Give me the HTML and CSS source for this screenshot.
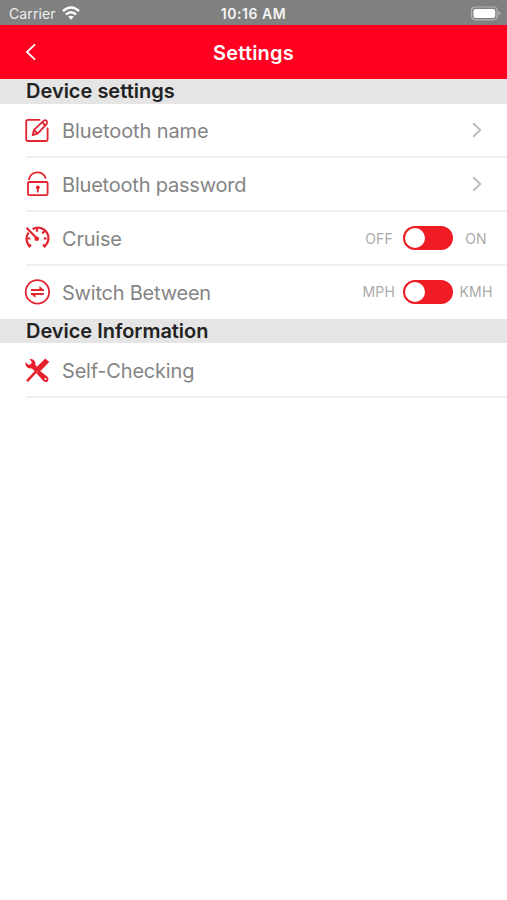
FILE: index.html
```html
<!DOCTYPE html>
<html lang="en">
<head>
<meta charset="utf-8">
<title>Settings</title>
<link rel="stylesheet" href="styles.css">
</head>
<body>
<div class="status">
  <div class="carrier"><span>Carrier</span>
    <svg class="wifi" width="18" height="14" viewBox="0 0 18 14" fill="none" stroke="#fff" stroke-width="2.5"><path d="M1 5.2Q9-2.2 17 5.2M4 8.5Q9 4 14 8.5"/><path d="M9 13.7 6.2 10.8Q9 8.5 11.8 10.8Z" fill="#fff" stroke="none"/></svg>
  </div>
  <span class="time">10:16 AM</span>
  <svg class="battery" width="31" height="15" viewBox="0 0 31 15"><rect x="1.6" y="1" width="25.5" height="12.8" rx="3.5" fill="none" stroke="#b5b5b5" stroke-width="1.2"/><rect x="3.5" y="3" width="21.7" height="9" rx="2" fill="#fff"/><path d="M28.4 5v4.6q2-.8 2-2.3t-2-2.3Z" fill="#b5b5b5"/></svg>
</div>
<header class="nav">
  <svg class="back" width="12" height="18" viewBox="0 0 12 18" fill="none" stroke="#fff" stroke-width="1.8"><path d="M10 1.3 2 9l8 7.7"/></svg>
  <h1>Settings</h1>
</header>
<main>
  <h2>Device settings</h2>
  <ul>
    <li>
      <svg class="icon" viewBox="0 0 26 26"><path d="M15.6 2.8H4Q2.2 2.8 2.2 4.6V22.2Q2.2 24 4 24H21.8Q23.6 24 23.6 22.2V11.5"/><path d="m8.6 18.1 1.4-5.2L19.8 3.6q1.3-1 2.8.3 1.4 1.6.2 3L13.6 16.7Zm1.5-5 3.3 3.4M18.2 5.2l3.2 3.3"/></svg>
      <span class="label l1">Bluetooth name</span>
      <svg class="chevron" viewBox="0 0 10 16"><path d="m1.2 1.2 7 6.8-7 6.8"/></svg>
    </li>
    <li>
      <svg class="icon" viewBox="0 0 26 26"><rect x="4" y="11" width="19.6" height="13.2" rx="1.2"/><path d="M5 8.4C7-.4 18-1 21.6 6.8"/><path d="M13.8 16.5v4.2"/><circle class="solid" cx="13.8" cy="16.3" r="1.9"/></svg>
      <span class="label l2">Bluetooth password</span>
      <svg class="chevron" viewBox="0 0 10 16"><path d="m1.2 1.2 7 6.8-7 6.8"/></svg>
    </li>
    <li>
      <svg class="icon bold" viewBox="0 0 26 26"><path d="M8.7 4.2A10 10 0 0 1 19.5 21.8M4.6 7.7A10 10 0 0 0 6.5 21.8"/><path d="M2.5 2.8 12 12.6M13 3.5v3.2M3.3 13.5h3M22.7 13.5h-3M20.4 6.3l-2.2 2.1M4.4 21.8l2.6-2.2M21.6 21.8 19 19.6"/><circle class="solid" cx="12.8" cy="13.7" r="2.3"/></svg>
      <span class="label l3">Cruise</span>
      <div class="control"><span class="off">OFF</span><i class="toggle"></i><span class="on">ON</span></div>
    </li>
    <li>
      <svg class="icon" viewBox="0 0 26 26"><circle cx="13.4" cy="12.9" r="11.7"/><path class="arrows" d="M7 10.9h12.6M19.8 14.9H7.2"/><path class="solid" d="M15.4 6.7 20.6 11.9H15.4zM11.4 19.1 6.2 13.9h5.2z"/></svg>
      <span class="label l4">Switch Between</span>
      <div class="control"><span class="off mph">MPH</span><i class="toggle"></i><span class="on">KMH</span></div>
    </li>
  </ul>
  <h2 class="info">Device Information</h2>
  <ul>
    <li class="last">
      <svg class="icon" viewBox="0 0 26 26"><path class="solid" d="M5.3 2.2Q9.3 1 11 4.6q.8 1.7.3 3.5l3.2 3.2-3.4 3.3-3.4-3.4Q4.4 12 2.2 9.2 1 7.4 1.4 5.2l3.1 2.5 2.7-.6.5-2.6ZM15.2 13.2l8.3 6.6q2 2.2.3 4.4-2.2 1.8-4.4-.2L12.4 16.3Z"/><path class="solid" d="M21.3 1.4 25.2 5 17 13.6l-3.3 1L4 24.9l-1.9-1.6 9.6-10.4.7-2.6Z"/><circle cx="21.5" cy="22" r="1.1" fill="#fff" stroke="none"/></svg>
      <span class="label l5">Self-Checking</span>
    </li>
  </ul>
</main>
</body>
</html>
```
FILE: styles.css
```css
* { box-sizing: border-box; }
body { margin: 0; background: #fff; font-family: Inter, "Liberation Sans", sans-serif; color: #222; }
h1, h2, ul { margin: 0; padding: 0; }
ul { list-style: none; }
svg { display: block; flex: none; }
.status { height: 25px; background: #808080; color: #fff; display: grid; grid-template-columns: 1fr auto 1fr; align-items: center; padding: 1px 6px 0 9px; }
.carrier { display: flex; align-items: center; gap: 6px; font-size: 14px; line-height: 24px; color: #eee; letter-spacing: .1px; padding-top: 1px; }
.wifi { margin-top: -2px; }
.time { font-size: 14px; line-height: 24px; font-weight: 600; color: #f4f4f4; letter-spacing: .55px; margin-left: -3px; }
.battery { justify-self: end; }
.nav { height: 54px; background: #ff0020; color: #fff; display: grid; grid-template-columns: 1fr auto 1fr; align-items: center; padding: 0 25px; }
.nav h1 { font-size: 20px; line-height: 24px; font-weight: 600; letter-spacing: .2px; padding-top: 1px; }
h2 { height: 25px; padding-left: 26px; background: #e5e5e5; font-size: 20px; line-height: 25px; font-weight: 600; letter-spacing: 0; }
h2.info { height: 24px; line-height: 25px; letter-spacing: -.03px; }
li { height: 54px; margin-left: 26px; padding-right: 25px; border-bottom: 2px solid #efefef; display: flex; align-items: center; }
li:nth-child(4) { height: 53px; border-bottom-color: transparent; }
li.last { height: 55px; }
.icon { width: 26px; height: 26px; fill: none; stroke: #e22531; stroke-width: 1.8; stroke-linejoin: round; stroke-linecap: round; margin-left: -2px; }
.icon.bold { stroke-width: 2.2; stroke-linecap: butt; }
.icon .solid { fill: #e8202c; stroke: none; }
.icon .arrows { stroke-width: 2; stroke-linecap: butt; }
.label { margin-left: 12px; flex: 1; padding-top: 2px; font-size: 20px; line-height: 26px; color: #858585; white-space: nowrap; }
.l1 { letter-spacing: -.1px; }
.l2 { letter-spacing: -.2px; }
.l3 { letter-spacing: -.2px; }
.l4 { letter-spacing: -.22px; }
.l5 { letter-spacing: -.2px; }
.chevron { width: 10px; height: 16px; fill: none; stroke: #bdbdbd; stroke-width: 2; }
.control { display: grid; grid-template-columns: 40px 50px 46px; align-items: center; margin-right: -17px; font-size: 14px; color: #aaa; letter-spacing: .2px; }
.off { justify-self: end; margin-right: 10px; }
.off.mph { margin-right: 8px; }
.on { justify-self: center; }
.toggle { width: 50px; height: 24px; border: 2px solid #f01c24; border-radius: 12px; background: #f01c24; }
.toggle::before { content: ""; display: block; width: 20px; height: 20px; border-radius: 50%; background: #fff; }
```
